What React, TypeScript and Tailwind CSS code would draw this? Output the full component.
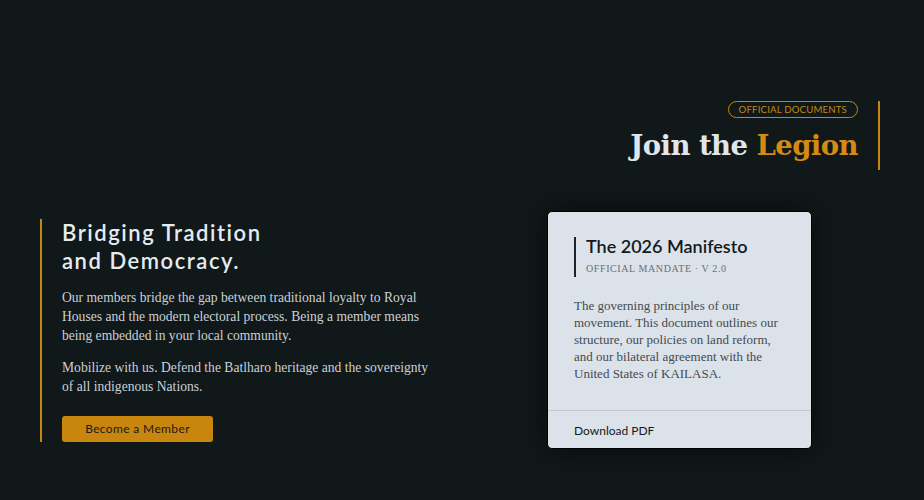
const rounded = "font-['Lato',_'Noto_Sans',_sans-serif]";
const serif = "font-['Liberation_Serif',_'DejaVu_Serif',_serif]";

function Header() {
  return (
    <div className="flex justify-end pr-[44px] pt-[101px]">
      <div className="flex flex-col items-end border-r-2 border-[#c8860f] pr-[20px] pb-[6px]">
        <span
          className={`${rounded} rounded-full border border-[#c8860f] px-[10px] text-[9.6px] leading-[15px] uppercase tracking-[0.02em] text-[#c8860f]`}
        >
          Official Documents
        </span>
        <h1
          className={`font-['DejaVu_Serif',_serif] mt-[8px] text-[27.5px] font-bold leading-[38px] tracking-[-0.02em] text-[#dfe6ee]`}
        >
          Join the <span className="text-[#d48a14]">Legion</span>
        </h1>
      </div>
    </div>
  );
}

function Intro() {
  return (
    <div className="w-[397px] border-l-2 border-[#c8860f] pl-[20px]">
      <h2
        className={`${rounded} text-[22px] font-semibold leading-[28px] tracking-[0.07em] text-[#e4ebf2]`}
      >
        Bridging Tradition
        <br />
        and Democracy.
      </h2>
      <p className={`${serif} mt-[13px] text-[13.6px] leading-[19px] text-[#c9d0d6]`}>
        Our members bridge the gap between traditional loyalty to Royal Houses and the modern
        electoral process. Being a member means being embedded in your local community.
      </p>
      <p className={`${serif} mt-[13px] text-[13.6px] leading-[19px] text-[#c9d0d6]`}>
        Mobilize with us. Defend the Batlharo heritage and the sovereignty of all indigenous
        Nations.
      </p>
      <button
        type="button"
        className={`${rounded} mt-[20px] h-[26px] w-[151px] rounded-[3px] bg-[#c8860f] text-[12px] tracking-[0.03em] text-[#1c1a14]`}
      >
        Become a Member
      </button>
    </div>
  );
}

function ManifestoCard() {
  return (
    <div className="ml-[110px] w-[265px] overflow-hidden rounded-[5px] border border-black bg-[#dbe2e9] shadow-[0_0_28px_rgba(0,0,0,0.6)]">
      <div className="px-[26px] pt-[25px] pb-[28px]">
        <div className="border-l-2 border-[#1d2326] pl-[10px] pb-[1px]">
          <h3 className={`${rounded} text-[18px] font-semibold leading-[18px] text-[#15191c]`}>
            The 2026 Manifesto
          </h3>
          <p
            className={`${serif} mt-[7px] text-[10px] uppercase leading-[14px] tracking-[0.06em] text-[#6b7075]`}
          >
            Official Mandate · V 2.0
          </p>
        </div>
        <p className={`${serif} mt-[20px] text-[13px] leading-[17px] text-[#454b50]`}>
          The governing principles of our movement. This document outlines our structure, our
          policies on land reform, and our bilateral agreement with the United States of KAILASA.
        </p>
      </div>
      <div className="border-t border-[#c2c8ce] px-[26px] pt-[10px] pb-[9px] leading-[17px]">
        <span className={`${rounded} text-[12px] text-[#15191c]`}>Download PDF</span>
      </div>
    </div>
  );
}

export default function App() {
  return (
    <div className="min-h-[500px] w-full bg-[#111819]">
      <Header />
      <div className="flex items-center pl-[40px] pt-[41px]">
        <Intro />
        <ManifestoCard />
      </div>
    </div>
  );
}
